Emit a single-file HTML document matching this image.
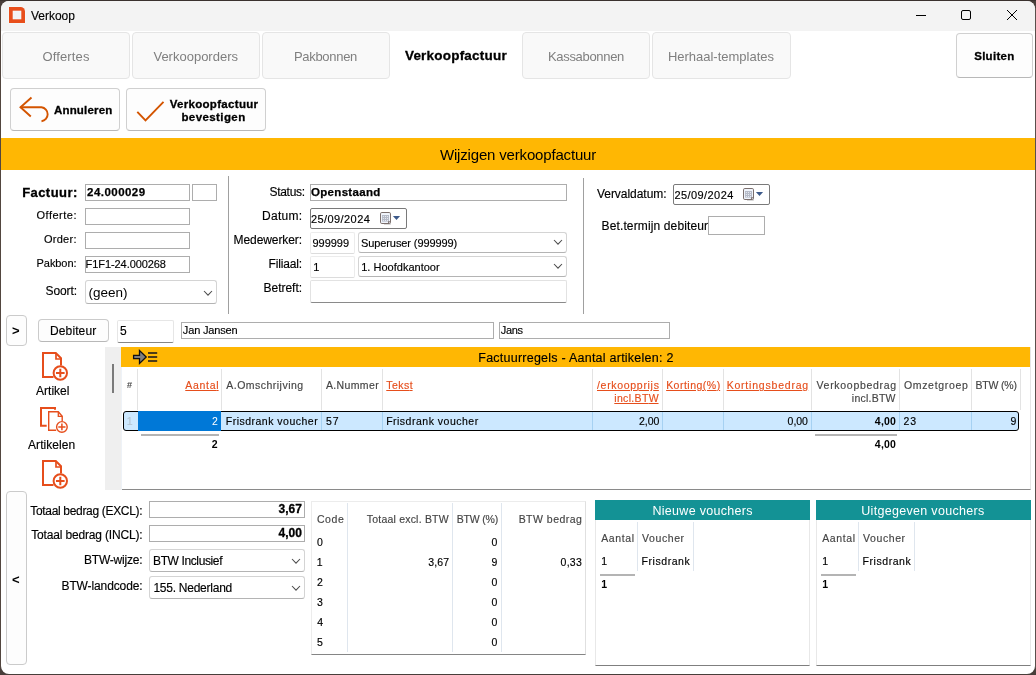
<!DOCTYPE html>
<html><head><meta charset="utf-8"><title>Verkoop</title>
<style>
html,body{margin:0;padding:0}
body{width:1036px;height:675px;background:#483e3a;position:relative;overflow:hidden;font-family:"Liberation Sans",sans-serif;}
div,span,svg{position:absolute;box-sizing:border-box;}
span{white-space:nowrap;display:block}
</style></head><body>
<div style="left:0;top:0;width:1036px;height:675px;will-change:transform">
<div style="left:1px;top:1px;width:1034px;height:673px;background:#fff;border-radius:8px;overflow:hidden"><div style="left:0;top:0;width:1034px;height:30px;background:#f3f3f3"></div></div>
<div style="left:0px;top:0px;width:1036px;height:1px;background:#3a312e;"></div>
<div style="left:0px;top:8px;width:1px;height:660px;background:#52463f;"></div>
<div style="left:1035px;top:8px;width:1px;height:660px;background:#5a4f4b;"></div>
<svg style="left:8px;top:6px" width="18" height="18" viewBox="-1 -1 18 18"><path d="M0 0H11.500L16 4.500V16H0z" fill="#e84e1b" stroke="#f4fbfb" stroke-width="1" paint-order="stroke"/><path d="M11.500 0A4.500 4.500 0 0 1 16 4.500L16 0z" fill="#f3f3f3"/><path d="M0 0H11.500A4.500 4.500 0 0 1 16 4.500V16H0z" fill="#e84e1b"/><rect x="4" y="4" width="8" height="8" fill="#f3f3f3" stroke="#f4fbfb" stroke-width="0.600"/></svg>
<span style="top:10px;font-size:12px;line-height:1;color:#000;-webkit-text-stroke:0.15px #000;left:30.95px;">Verkoop</span>
<svg style="left:910px;top:5px" width="120" height="22" viewBox="0 0 120 22" fill="none" stroke="#000" stroke-width="1"><path d="M6 10.5H16"/><rect x="51.500" y="5.500" width="9" height="9" rx="1.500"/><path d="M97 5L107 15M107 5L97 15"/></svg>
<div style="left:2px;top:32px;width:128px;height:47px;background:#f9f9f9;border:1px solid #e5e5e5;border-radius:4px;"></div>
<div style="left:132px;top:32px;width:128px;height:47px;background:#f9f9f9;border:1px solid #e5e5e5;border-radius:4px;"></div>
<div style="left:262px;top:32px;width:128px;height:47px;background:#f9f9f9;border:1px solid #e5e5e5;border-radius:4px;"></div>
<div style="left:522px;top:32px;width:128px;height:47px;background:#f9f9f9;border:1px solid #e5e5e5;border-radius:4px;"></div>
<div style="left:652px;top:32px;width:139px;height:47px;background:#f9f9f9;border:1px solid #e5e5e5;border-radius:4px;"></div>
<span style="top:50px;font-size:13px;line-height:1;color:#7f7f7f;letter-spacing:0.154px;left:42.39px;">Offertes</span>
<span style="top:50px;font-size:13px;line-height:1;color:#7f7f7f;left:153.45px;">Verkooporders</span>
<span style="top:50px;font-size:13px;line-height:1;color:#7f7f7f;letter-spacing:-0.298px;left:293.93px;">Pakbonnen</span>
<span style="top:49px;font-size:13.5px;line-height:1;color:#000;font-weight:bold;-webkit-text-stroke:0.3px #000;letter-spacing:0.211px;left:404.92px;">Verkoopfactuur</span>
<span style="top:50px;font-size:13px;line-height:1;color:#7f7f7f;letter-spacing:-0.311px;left:547.93px;">Kassabonnen</span>
<span style="top:50px;font-size:13px;line-height:1;color:#7f7f7f;letter-spacing:-0.011px;left:667.93px;">Herhaal-templates</span>
<div style="left:956px;top:33px;width:77px;height:45px;background:#fdfdfd;border:1px solid #d0d0d0;border-bottom-color:#b8b8b8;border-radius:4px;"></div>
<span style="top:51px;font-size:11.5px;line-height:1;color:#000;font-weight:bold;-webkit-text-stroke:0.3px #000;letter-spacing:0.283px;left:974.18px;">Sluiten</span>
<div style="left:10px;top:88px;width:110px;height:43px;background:#fdfdfd;border:1px solid #d0d0d0;border-bottom-color:#b8b8b8;border-radius:4px;"></div>
<div style="left:126px;top:88px;width:140px;height:43px;background:#fdfdfd;border:1px solid #d0d0d0;border-bottom-color:#b8b8b8;border-radius:4px;"></div>
<svg style="left:18px;top:95px" width="34" height="30" viewBox="18 95 34 30" fill="none" stroke="#d35400" stroke-width="1.9" stroke-linecap="butt"><path d="M31.5 97.500L20.500 107.300L30.800 116.500"/><path d="M20.500 107.300H41.500A7 7 0 0 1 41.500 121.200"/></svg>
<span style="top:105px;font-size:11.5px;line-height:1;color:#000;font-weight:bold;-webkit-text-stroke:0.3px #000;letter-spacing:0.203px;left:53.92px;">Annuleren</span>
<svg style="left:134px;top:98px" width="34" height="26" viewBox="134 98 34 26" fill="none" stroke="#d35400" stroke-width="1.9"><path d="M137.300 111.800L145.500 120.300L163.500 101.800"/></svg>
<span style="top:99px;font-size:11.5px;line-height:1;color:#000;font-weight:bold;-webkit-text-stroke:0.3px #000;letter-spacing:0.314px;left:169.63px;">Verkoopfactuur</span>
<span style="top:112px;font-size:11.5px;line-height:1;color:#000;font-weight:bold;-webkit-text-stroke:0.3px #000;letter-spacing:0.409px;left:181.45px;">bevestigen</span>
<div style="left:1px;top:138px;width:1034px;height:32px;background:#ffb703;"></div>
<span style="top:147px;font-size:15px;line-height:1;color:#000;letter-spacing:-0.171px;left:439.94px;">Wijzigen verkoopfactuur</span>
<span style="top:186px;font-size:13px;line-height:1;color:#000;font-weight:bold;-webkit-text-stroke:0.3px #000;letter-spacing:0.444px;left:22.14px;">Factuur:</span>
<div style="left:85px;top:184px;width:105px;height:17px;background:#fff;border:1px solid #adadad;"></div>
<div style="left:192px;top:184px;width:25px;height:17px;background:#fff;border:1px solid #adadad;"></div>
<span style="top:187px;font-size:11.5px;line-height:1;color:#000;font-weight:bold;-webkit-text-stroke:0.25px #000;letter-spacing:0.456px;left:87.11px;">24.000029</span>
<span style="top:210px;font-size:11px;line-height:1;color:#000;-webkit-text-stroke:0.15px #000;letter-spacing:0.505px;left:36.48px;">Offerte:</span>
<div style="left:85px;top:208px;width:105px;height:17px;background:#fff;border:1px solid #adadad;"></div>
<span style="top:234px;font-size:11px;line-height:1;color:#000;-webkit-text-stroke:0.15px #000;letter-spacing:0.268px;left:43.98px;">Order:</span>
<div style="left:85px;top:232px;width:105px;height:17px;background:#fff;border:1px solid #adadad;"></div>
<span style="top:258px;font-size:11px;line-height:1;color:#000;-webkit-text-stroke:0.15px #000;letter-spacing:-0.077px;left:36.60px;">Pakbon:</span>
<div style="left:85px;top:256px;width:105px;height:17px;background:#fff;border:1px solid #adadad;"></div>
<span style="top:259px;font-size:11px;line-height:1;color:#000;-webkit-text-stroke:0.15px #000;letter-spacing:-0.074px;left:85.60px;">F1F1-24.000268</span>
<span style="top:285px;font-size:12px;line-height:1;color:#000;-webkit-text-stroke:0.15px #000;letter-spacing:-0.077px;left:45.46px;">Soort:</span>
<div style="left:85px;top:280px;width:132px;height:24px;background:#fff;border:1px solid #d4d4d4;border-bottom-color:#b4b4b4;border-radius:3px;"></div>
<span style="top:286px;font-size:13.5px;line-height:1;color:#000;letter-spacing:0.010px;left:88.46px;">(geen)</span>
<svg style="left:202.5px;top:289.5px" width="10" height="6.2" viewBox="-1 -1 10 6.2" fill="none" stroke="#4c4c4c" stroke-width="1.050"><path d="M0 0L4.0 4.2L8 0"/></svg>
<div style="left:228px;top:176px;width:1px;height:138px;background:#a0a0a0;"></div>
<div style="left:583px;top:178px;width:1px;height:136px;background:#a0a0a0;"></div>
<span style="top:186px;font-size:12px;line-height:1;color:#000;-webkit-text-stroke:0.15px #000;letter-spacing:-0.287px;left:269.46px;">Status:</span>
<div style="left:310px;top:184px;width:257px;height:17px;background:#fff;border:1px solid #adadad;"></div>
<span style="top:187px;font-size:11.5px;line-height:1;color:#000;font-weight:bold;-webkit-text-stroke:0.25px #000;letter-spacing:0.308px;left:311.03px;">Openstaand</span>
<span style="top:210px;font-size:12px;line-height:1;color:#000;-webkit-text-stroke:0.15px #000;letter-spacing:0.279px;left:262.02px;">Datum:</span>
<div style="left:310px;top:208px;width:97px;height:21px;background:#fff;border:1px solid #7a7a7a;border-radius:2px;"></div>
<span style="top:214px;font-size:11px;line-height:1;color:#000;-webkit-text-stroke:0.15px #000;letter-spacing:0.424px;left:310.95px;">25/09/2024</span>
<svg style="left:380px;top:212px" width="24" height="14" viewBox="0 0 24 14"><path d="M4 12.500H10.500V5" stroke="#d8d8d8" stroke-width="1" fill="none"/><rect x="0.500" y="0.500" width="10" height="11" rx="1.300" fill="#f0f4fb" stroke="#7b6f6d" stroke-width="1"/><rect x="2" y="3" width="7" height="6.600" fill="#b6bbc8"/><rect x="2.9" y="4.1" width="0.900" height="0.900" fill="#f4f6fa"/><rect x="2.9" y="6.1" width="0.900" height="0.900" fill="#f4f6fa"/><rect x="2.9" y="8.1" width="0.900" height="0.900" fill="#f4f6fa"/><rect x="5.0" y="4.1" width="0.900" height="0.900" fill="#f4f6fa"/><rect x="5.0" y="6.1" width="0.900" height="0.900" fill="#f4f6fa"/><rect x="5.0" y="8.1" width="0.900" height="0.900" fill="#f4f6fa"/><rect x="7.1" y="4.1" width="0.900" height="0.900" fill="#f4f6fa"/><rect x="7.1" y="6.1" width="0.900" height="0.900" fill="#f4f6fa"/><rect x="7.1" y="8.1" width="0.900" height="0.900" fill="#f4f6fa"/><path d="M8 11.500V9.300H10.500z" fill="#7b6f6d"/><path d="M12.900 4H20.100L16.500 8z" fill="#3d5a8a"/></svg>
<span style="top:234px;font-size:12px;line-height:1;color:#000;-webkit-text-stroke:0.15px #000;letter-spacing:-0.078px;left:233.52px;">Medewerker:</span>
<div style="left:310px;top:232px;width:45px;height:22px;background:#fff;border:1px solid #ececec;border-bottom-color:#dcdcdc;border-radius:2px;"></div>
<span style="top:238px;font-size:11px;line-height:1;color:#000;-webkit-text-stroke:0.15px #000;letter-spacing:-0.036px;left:312.49px;">999999</span>
<div style="left:358px;top:232px;width:209px;height:21px;background:#fff;border:1px solid #d4d4d4;border-bottom-color:#b4b4b4;border-radius:3px;"></div>
<span style="top:238px;font-size:11px;line-height:1;color:#000;-webkit-text-stroke:0.15px #000;letter-spacing:-0.098px;left:361.00px;">Superuser (999999)</span>
<svg style="left:553px;top:239.3px" width="10" height="6.2" viewBox="-1 -1 10 6.2" fill="none" stroke="#4c4c4c" stroke-width="1.050"><path d="M0 0L4.0 4.2L8 0"/></svg>
<span style="top:258px;font-size:12px;line-height:1;color:#000;-webkit-text-stroke:0.15px #000;letter-spacing:-0.157px;left:268.52px;">Filiaal:</span>
<div style="left:310px;top:256px;width:45px;height:22px;background:#fff;border:1px solid #ececec;border-bottom-color:#dcdcdc;border-radius:2px;"></div>
<span style="top:262px;font-size:11px;line-height:1;color:#000;-webkit-text-stroke:0.15px #000;left:313.16px;">1</span>
<div style="left:358px;top:256px;width:209px;height:21px;background:#fff;border:1px solid #d4d4d4;border-bottom-color:#b4b4b4;border-radius:3px;"></div>
<span style="top:262px;font-size:11px;line-height:1;color:#000;-webkit-text-stroke:0.15px #000;letter-spacing:0.017px;left:361.16px;">1. Hoofdkantoor</span>
<svg style="left:553px;top:263.3px" width="10" height="6.2" viewBox="-1 -1 10 6.2" fill="none" stroke="#4c4c4c" stroke-width="1.050"><path d="M0 0L4.0 4.2L8 0"/></svg>
<span style="top:282px;font-size:12px;line-height:1;color:#000;-webkit-text-stroke:0.15px #000;letter-spacing:-0.016px;left:263.52px;">Betreft:</span>
<div style="left:310px;top:280px;width:257px;height:23px;background:#fff;border:1px solid #e2e2e2;border-bottom-color:#8a8a8a;border-radius:2px;"></div>
<span style="top:188px;font-size:12px;line-height:1;color:#000;-webkit-text-stroke:0.15px #000;letter-spacing:-0.036px;left:596.95px;">Vervaldatum:</span>
<div style="left:673px;top:184px;width:97px;height:21px;background:#fff;border:1px solid #7a7a7a;border-radius:2px;"></div>
<span style="top:190px;font-size:11px;line-height:1;color:#000;-webkit-text-stroke:0.15px #000;letter-spacing:0.424px;left:674.45px;">25/09/2024</span>
<svg style="left:743px;top:188px" width="24" height="14" viewBox="0 0 24 14"><path d="M4 12.500H10.500V5" stroke="#d8d8d8" stroke-width="1" fill="none"/><rect x="0.500" y="0.500" width="10" height="11" rx="1.300" fill="#f0f4fb" stroke="#7b6f6d" stroke-width="1"/><rect x="2" y="3" width="7" height="6.600" fill="#b6bbc8"/><rect x="2.9" y="4.1" width="0.900" height="0.900" fill="#f4f6fa"/><rect x="2.9" y="6.1" width="0.900" height="0.900" fill="#f4f6fa"/><rect x="2.9" y="8.1" width="0.900" height="0.900" fill="#f4f6fa"/><rect x="5.0" y="4.1" width="0.900" height="0.900" fill="#f4f6fa"/><rect x="5.0" y="6.1" width="0.900" height="0.900" fill="#f4f6fa"/><rect x="5.0" y="8.1" width="0.900" height="0.900" fill="#f4f6fa"/><rect x="7.1" y="4.1" width="0.900" height="0.900" fill="#f4f6fa"/><rect x="7.1" y="6.1" width="0.900" height="0.900" fill="#f4f6fa"/><rect x="7.1" y="8.1" width="0.900" height="0.900" fill="#f4f6fa"/><path d="M8 11.500V9.300H10.500z" fill="#7b6f6d"/><path d="M12.900 4H20.100L16.500 8z" fill="#3d5a8a"/></svg>
<span style="top:220px;font-size:12px;line-height:1;color:#000;-webkit-text-stroke:0.15px #000;letter-spacing:0.134px;left:601.52px;">Bet.termijn debiteur:</span>
<div style="left:708px;top:216px;width:57px;height:19px;background:#fff;border:1px solid #adadad;"></div>
<div style="left:6px;top:315px;width:21px;height:31px;background:#fdfdfd;border:1px solid #cbcbcb;border-radius:4px;"></div>
<span style="top:324px;font-size:13px;line-height:1;color:#000;font-weight:bold;left:11.95px;">&gt;</span>
<div style="left:38px;top:319px;width:71px;height:23px;background:#fdfdfd;border:1px solid #cbcbcb;border-radius:4px;border-bottom-color:#b8b8b8;"></div>
<span style="top:325px;font-size:12px;line-height:1;color:#000;-webkit-text-stroke:0.15px #000;letter-spacing:0.117px;left:50.02px;">Debiteur</span>
<div style="left:117px;top:320px;width:57px;height:23px;background:#fff;border:1px solid #e6e6e6;border-bottom-color:#868686;border-radius:2px;"></div>
<span style="top:325px;font-size:12px;line-height:1;color:#000;-webkit-text-stroke:0.15px #000;left:120.02px;">5</span>
<div style="left:181px;top:322px;width:313px;height:17px;background:#fff;border:1px solid #adadad;"></div>
<span style="top:325px;font-size:11px;line-height:1;color:#000;-webkit-text-stroke:0.15px #000;letter-spacing:-0.155px;left:182.84px;">Jan Jansen</span>
<div style="left:499px;top:322px;width:171px;height:17px;background:#fff;border:1px solid #adadad;"></div>
<span style="top:325px;font-size:11px;line-height:1;color:#000;-webkit-text-stroke:0.15px #000;letter-spacing:-0.391px;left:500.83px;">Jans</span>
<svg style="left:42px;top:352px" width="28" height="31" viewBox="0 0 28 31" fill="none" stroke="#e64e1c" stroke-width="2"><path d="M11.500 25H1V1H13.800L19 6.200V13.500"/><path d="M14 1V7H19" stroke-width="1.700"/><circle cx="18.300" cy="21" r="6.700"/><path d="M14 21H22.600M18.300 16.700V25.300"/></svg>
<span style="top:385px;font-size:12px;line-height:1;color:#000;-webkit-text-stroke:0.15px #000;letter-spacing:0.030px;left:35.98px;">Artikel</span>
<svg style="left:40px;top:407px" width="30" height="28" viewBox="0 0 30 28" fill="none" stroke="#e64e1c"><path d="M6.700 18.800H1V1H15V2.700" stroke-width="2"/><path d="M16.200 23.200H8.700V4.800H18.300L22.200 9.300V14" stroke-width="1.400"/><path d="M18.300 4.800V9.300H22.200" stroke-width="1.300"/><circle cx="21.900" cy="19.900" r="5.300" stroke-width="1.400"/><path d="M18.300 19.900H25.500M21.900 16.500V23.300" stroke-width="1.500"/></svg>
<span style="top:439px;font-size:12px;line-height:1;color:#000;-webkit-text-stroke:0.15px #000;letter-spacing:0.038px;left:28.08px;">Artikelen</span>
<div style="left:30px;top:455px;width:60px;height:35px;overflow:hidden">
<svg style="left:12px;top:5px" width="28" height="31" viewBox="0 0 28 31" fill="none" stroke="#e64e1c" stroke-width="2"><path d="M11.500 25H1V1H13.800L19 6.200V13.500"/><path d="M14 1V7H19" stroke-width="1.700"/><circle cx="18.300" cy="21" r="6.700"/><path d="M14 21H22.600M18.300 16.700V25.300"/></svg>
</div>
<div style="left:105px;top:347px;width:16px;height:143px;background:#efefef;"></div>
<div style="left:112px;top:364px;width:2px;height:29px;background:#7a7a7a;"></div>
<div style="left:121px;top:347px;width:910px;height:143px;background:#fff;border-bottom:1px solid #8a8a8a;border-right:1px solid #e6e6e6;"></div>
<div style="left:121px;top:347px;width:909px;height:20px;background:#ffb703;"></div>
<svg style="left:132px;top:348px" width="27" height="18" viewBox="0 0 27 18"><path d="M1.600 7.400H7.500V2.500L14.200 9L7.500 15.500V10.600H1.600z" fill="#808080" stroke="#101014" stroke-width="1.300"/><path d="M16 5H25.200M16 8.900H25.200M16 12.900H25.200" stroke="#15151f" stroke-width="1.500"/></svg>
<span style="top:352px;font-size:12.5px;line-height:1;color:#000;-webkit-text-stroke:0.15px #000;letter-spacing:0.240px;left:478.28px;">Factuurregels - Aantal artikelen: 2</span>
<div style="left:137px;top:369px;width:1px;height:41px;background:#e3e3e3;"></div>
<div style="left:221px;top:369px;width:1px;height:41px;background:#e3e3e3;"></div>
<div style="left:321px;top:369px;width:1px;height:41px;background:#e3e3e3;"></div>
<div style="left:382px;top:369px;width:1px;height:41px;background:#e3e3e3;"></div>
<div style="left:592px;top:369px;width:1px;height:41px;background:#e3e3e3;"></div>
<div style="left:662px;top:369px;width:1px;height:41px;background:#e3e3e3;"></div>
<div style="left:723px;top:369px;width:1px;height:41px;background:#e3e3e3;"></div>
<div style="left:811px;top:369px;width:1px;height:41px;background:#e3e3e3;"></div>
<div style="left:899px;top:369px;width:1px;height:41px;background:#e3e3e3;"></div>
<div style="left:971px;top:369px;width:1px;height:41px;background:#e3e3e3;"></div>
<div style="left:1020px;top:369px;width:1px;height:41px;background:#e3e3e3;"></div>
<div style="left:121px;top:367px;width:1px;height:123px;background:#eef2f7;"></div>
<span style="top:381px;font-size:9px;line-height:1;color:#444;-webkit-text-stroke:0.15px #444;left:126.96px;">#</span>
<span style="top:380px;font-size:10.5px;line-height:1;color:#e64e1c;-webkit-text-stroke:0.15px #e64e1c;letter-spacing:0.709px;left:185.28px;text-decoration:underline;text-underline-offset:1px;text-decoration-thickness:1px;">Aanta<i style="font-style:normal;letter-spacing:0">l</i></span>
<span style="top:380px;font-size:10.5px;line-height:1;color:#444;-webkit-text-stroke:0.15px #444;letter-spacing:0.484px;left:226.28px;">A.Omschrijving</span>
<span style="top:380px;font-size:10.5px;line-height:1;color:#444;-webkit-text-stroke:0.15px #444;letter-spacing:0.359px;left:325.98px;">A.Nummer</span>
<span style="top:380px;font-size:10.5px;line-height:1;color:#e64e1c;-webkit-text-stroke:0.15px #e64e1c;letter-spacing:0.449px;left:386.27px;text-decoration:underline;text-underline-offset:1px;text-decoration-thickness:1px;">Teks<i style="font-style:normal;letter-spacing:0">t</i></span>
<span style="top:380px;font-size:10.5px;line-height:1;color:#e64e1c;-webkit-text-stroke:0.15px #e64e1c;letter-spacing:0.691px;left:597.00px;text-decoration:underline;text-underline-offset:1px;text-decoration-thickness:1px;">/erkoopprij<i style="font-style:normal;letter-spacing:0">s</i></span>
<span style="top:393px;font-size:10.5px;line-height:1;color:#e64e1c;-webkit-text-stroke:0.15px #e64e1c;letter-spacing:0.318px;left:614.31px;text-decoration:underline;text-underline-offset:1px;text-decoration-thickness:1px;">incl.BT<i style="font-style:normal;letter-spacing:0">W</i></span>
<span style="top:380px;font-size:10.5px;line-height:1;color:#e64e1c;-webkit-text-stroke:0.15px #e64e1c;letter-spacing:0.490px;left:666.14px;text-decoration:underline;text-underline-offset:1px;text-decoration-thickness:1px;">Korting(%<i style="font-style:normal;letter-spacing:0">)</i></span>
<span style="top:380px;font-size:10.5px;line-height:1;color:#e64e1c;-webkit-text-stroke:0.15px #e64e1c;letter-spacing:0.794px;left:726.64px;text-decoration:underline;text-underline-offset:1px;text-decoration-thickness:1px;">Kortingsbedra<i style="font-style:normal;letter-spacing:0">g</i></span>
<span style="top:380px;font-size:10.5px;line-height:1;color:#444;-webkit-text-stroke:0.15px #444;letter-spacing:0.708px;left:816.46px;">Verkoopbedrag</span>
<span style="top:393px;font-size:10.5px;line-height:1;color:#444;-webkit-text-stroke:0.15px #444;letter-spacing:0.246px;left:851.81px;">incl.BTW</span>
<span style="top:380px;font-size:10.5px;line-height:1;color:#444;-webkit-text-stroke:0.15px #444;letter-spacing:0.683px;left:903.91px;">Omzetgroep</span>
<span style="top:380px;font-size:10.5px;line-height:1;color:#444;-webkit-text-stroke:0.15px #444;letter-spacing:-0.194px;left:975.54px;">BTW (%)</span>
<div style="left:123px;top:411px;width:896px;height:20px;background:#cce8ff;border:1px solid #000;border-radius:3px;"></div>
<div style="left:138px;top:411px;width:83px;height:20px;background:#0078d7;"></div>
<div style="left:321px;top:412px;width:1px;height:18px;background:#a6d1f2;"></div>
<div style="left:382px;top:412px;width:1px;height:18px;background:#a6d1f2;"></div>
<div style="left:592px;top:412px;width:1px;height:18px;background:#a6d1f2;"></div>
<div style="left:662px;top:412px;width:1px;height:18px;background:#a6d1f2;"></div>
<div style="left:723px;top:412px;width:1px;height:18px;background:#a6d1f2;"></div>
<div style="left:811px;top:412px;width:1px;height:18px;background:#a6d1f2;"></div>
<div style="left:899px;top:412px;width:1px;height:18px;background:#a6d1f2;"></div>
<div style="left:971px;top:412px;width:1px;height:18px;background:#a6d1f2;"></div>
<span style="top:416px;font-size:10.5px;line-height:1;color:#b4c4d2;-webkit-text-stroke:0.15px #b4c4d2;left:126.70px;">1</span>
<span style="top:416px;font-size:10.5px;line-height:1;color:#fff;left:211.88px;">2</span>
<span style="top:416px;font-size:10.5px;line-height:1;color:#000;-webkit-text-stroke:0.15px #000;letter-spacing:0.494px;left:225.74px;">Frisdrank voucher</span>
<span style="top:416px;font-size:10.5px;line-height:1;color:#000;-webkit-text-stroke:0.15px #000;letter-spacing:0.967px;left:325.88px;">57</span>
<span style="top:416px;font-size:10.5px;line-height:1;color:#000;-webkit-text-stroke:0.15px #000;letter-spacing:0.500px;left:386.14px;">Frisdrank voucher</span>
<span style="top:416px;font-size:10.5px;line-height:1;color:#000;-webkit-text-stroke:0.15px #000;left:638.98px;">2,00</span>
<span style="top:416px;font-size:10.5px;line-height:1;color:#000;-webkit-text-stroke:0.15px #000;letter-spacing:-0.042px;left:787.59px;">0,00</span>
<span style="top:416px;font-size:10.5px;line-height:1;color:#000;font-weight:bold;letter-spacing:0.214px;left:874.84px;">4,00</span>
<span style="top:416px;font-size:10.5px;line-height:1;color:#000;-webkit-text-stroke:0.15px #000;letter-spacing:0.799px;left:903.58px;">23</span>
<span style="top:416px;font-size:10.5px;line-height:1;color:#000;-webkit-text-stroke:0.15px #000;left:1010.62px;">9</span>
<div style="left:141px;top:434px;width:78px;height:2px;background:#b4b4b4;"></div>
<span style="top:439px;font-size:10.5px;line-height:1;color:#000;font-weight:bold;left:211.74px;">2</span>
<div style="left:815px;top:434px;width:82px;height:2px;background:#b4b4b4;"></div>
<span style="top:439px;font-size:10.5px;line-height:1;color:#000;font-weight:bold;letter-spacing:0.214px;left:874.84px;">4,00</span>
<div style="left:6px;top:491px;width:21px;height:174px;background:#fdfdfd;border:1px solid #cbcbcb;border-radius:4px;"></div>
<span style="top:573px;font-size:13px;line-height:1;color:#000;font-weight:bold;left:11.95px;">&lt;</span>
<span style="top:505px;font-size:12px;line-height:1;color:#000;-webkit-text-stroke:0.15px #000;letter-spacing:-0.319px;left:30.24px;">Totaal bedrag (EXCL):</span>
<div style="left:149px;top:501px;width:156px;height:17px;background:#fff;border:1px solid #adadad;"></div>
<span style="top:503px;font-size:12px;line-height:1;color:#000;font-weight:bold;-webkit-text-stroke:0.3px #000;letter-spacing:0.075px;left:278.44px;">3,67</span>
<span style="top:529px;font-size:12px;line-height:1;color:#000;-webkit-text-stroke:0.15px #000;letter-spacing:-0.168px;left:31.24px;">Totaal bedrag (INCL):</span>
<div style="left:149px;top:525px;width:156px;height:17px;background:#fff;border:1px solid #adadad;"></div>
<span style="top:527px;font-size:12px;line-height:1;color:#000;font-weight:bold;-webkit-text-stroke:0.3px #000;letter-spacing:0.035px;left:278.52px;">4,00</span>
<span style="top:554px;font-size:12px;line-height:1;color:#000;-webkit-text-stroke:0.15px #000;letter-spacing:-0.208px;left:84.02px;">BTW-wijze:</span>
<div style="left:149px;top:549px;width:156px;height:23px;background:#fff;border:1px solid #d4d4d4;border-bottom-color:#b4b4b4;border-radius:3px;"></div>
<span style="top:555px;font-size:12px;line-height:1;color:#000;-webkit-text-stroke:0.15px #000;letter-spacing:-0.380px;left:153.02px;">BTW Inclusief</span>
<svg style="left:291px;top:557.7px" width="10" height="6.2" viewBox="-1 -1 10 6.2" fill="none" stroke="#4c4c4c" stroke-width="1.050"><path d="M0 0L4.0 4.2L8 0"/></svg>
<span style="top:580px;font-size:12px;line-height:1;color:#000;-webkit-text-stroke:0.15px #000;letter-spacing:-0.117px;left:61.52px;">BTW-landcode:</span>
<div style="left:149px;top:576px;width:156px;height:23px;background:#fff;border:1px solid #d4d4d4;border-bottom-color:#b4b4b4;border-radius:3px;"></div>
<span style="top:582px;font-size:12px;line-height:1;color:#000;-webkit-text-stroke:0.15px #000;letter-spacing:-0.245px;left:153.39px;">155. Nederland</span>
<svg style="left:291px;top:584.7px" width="10" height="6.2" viewBox="-1 -1 10 6.2" fill="none" stroke="#4c4c4c" stroke-width="1.050"><path d="M0 0L4.0 4.2L8 0"/></svg>
<div style="left:311px;top:501px;width:275px;height:154px;background:#fff;border:1px solid #ececec;border-bottom-color:#858585;border-right-color:#e0e0e0;"></div>
<div style="left:347px;top:503px;width:1px;height:149px;background:#dfe6ee;"></div>
<div style="left:452px;top:503px;width:1px;height:149px;background:#dfe6ee;"></div>
<div style="left:501px;top:503px;width:1px;height:149px;background:#dfe6ee;"></div>
<span style="top:514px;font-size:10.5px;line-height:1;color:#444;-webkit-text-stroke:0.15px #444;letter-spacing:0.662px;left:316.88px;">Code</span>
<span style="top:514px;font-size:10.5px;line-height:1;color:#444;-webkit-text-stroke:0.15px #444;letter-spacing:0.206px;left:366.77px;">Totaal excl. BTW</span>
<span style="top:514px;font-size:10.5px;line-height:1;color:#444;-webkit-text-stroke:0.15px #444;letter-spacing:-0.160px;left:456.64px;">BTW (%)</span>
<span style="top:514px;font-size:10.5px;line-height:1;color:#444;-webkit-text-stroke:0.15px #444;letter-spacing:0.488px;left:518.64px;">BTW bedrag</span>
<span style="top:537px;font-size:10.5px;line-height:1;color:#000;-webkit-text-stroke:0.15px #000;left:317.09px;">0</span>
<span style="top:537px;font-size:10.5px;line-height:1;color:#000;-webkit-text-stroke:0.15px #000;left:491.59px;">0</span>
<span style="top:557px;font-size:10.5px;line-height:1;color:#000;-webkit-text-stroke:0.15px #000;left:316.70px;">1</span>
<span style="top:557px;font-size:10.5px;line-height:1;color:#000;-webkit-text-stroke:0.15px #000;left:491.52px;">9</span>
<span style="top:577px;font-size:10.5px;line-height:1;color:#000;-webkit-text-stroke:0.15px #000;left:316.98px;">2</span>
<span style="top:577px;font-size:10.5px;line-height:1;color:#000;-webkit-text-stroke:0.15px #000;left:491.59px;">0</span>
<span style="top:597px;font-size:10.5px;line-height:1;color:#000;-webkit-text-stroke:0.15px #000;left:317.10px;">3</span>
<span style="top:597px;font-size:10.5px;line-height:1;color:#000;-webkit-text-stroke:0.15px #000;left:491.59px;">0</span>
<span style="top:617px;font-size:10.5px;line-height:1;color:#000;-webkit-text-stroke:0.15px #000;left:317.27px;">4</span>
<span style="top:617px;font-size:10.5px;line-height:1;color:#000;-webkit-text-stroke:0.15px #000;left:491.59px;">0</span>
<span style="top:637px;font-size:10.5px;line-height:1;color:#000;-webkit-text-stroke:0.15px #000;left:317.08px;">5</span>
<span style="top:637px;font-size:10.5px;line-height:1;color:#000;-webkit-text-stroke:0.15px #000;left:491.59px;">0</span>
<span style="top:557px;font-size:10.5px;line-height:1;color:#000;-webkit-text-stroke:0.15px #000;letter-spacing:0.163px;left:428.20px;">3,67</span>
<span style="top:557px;font-size:10.5px;line-height:1;color:#000;-webkit-text-stroke:0.15px #000;letter-spacing:0.242px;left:560.59px;">0,33</span>
<div style="left:595px;top:500px;width:215px;height:166px;background:#fff;border:1px solid #e8e8e8;border-bottom-color:#7f7f7f;"></div>
<div style="left:595px;top:500px;width:215px;height:20px;background:#139295;"></div>
<span style="top:505px;font-size:12.5px;line-height:1;color:#fff;letter-spacing:0.292px;left:652.48px;">Nieuwe vouchers</span>
<div style="left:637px;top:522px;width:1px;height:49px;background:#dfe6ee;"></div>
<div style="left:693px;top:522px;width:1px;height:49px;background:#dfe6ee;"></div>
<span style="top:533px;font-size:10.5px;line-height:1;color:#444;-webkit-text-stroke:0.15px #444;letter-spacing:0.649px;left:601.18px;">Aantal</span>
<span style="top:533px;font-size:10.5px;line-height:1;color:#444;-webkit-text-stroke:0.15px #444;letter-spacing:0.580px;left:642.06px;">Voucher</span>
<span style="top:556px;font-size:10.5px;line-height:1;color:#000;-webkit-text-stroke:0.15px #000;left:601.30px;">1</span>
<span style="top:556px;font-size:10.5px;line-height:1;color:#000;-webkit-text-stroke:0.15px #000;letter-spacing:0.560px;left:641.54px;">Frisdrank</span>
<div style="left:600px;top:574px;width:35px;height:2px;background:#b4b4b4;"></div>
<span style="top:579px;font-size:10.5px;line-height:1;color:#000;font-weight:bold;left:601.35px;">1</span>
<div style="left:816px;top:500px;width:215px;height:166px;background:#fff;border:1px solid #e8e8e8;border-bottom-color:#7f7f7f;"></div>
<div style="left:816px;top:500px;width:215px;height:20px;background:#139295;"></div>
<span style="top:505px;font-size:12.5px;line-height:1;color:#fff;letter-spacing:0.310px;left:861.24px;">Uitgegeven vouchers</span>
<div style="left:858px;top:522px;width:1px;height:49px;background:#dfe6ee;"></div>
<div style="left:914px;top:522px;width:1px;height:49px;background:#dfe6ee;"></div>
<span style="top:533px;font-size:10.5px;line-height:1;color:#444;-webkit-text-stroke:0.15px #444;letter-spacing:0.649px;left:822.18px;">Aantal</span>
<span style="top:533px;font-size:10.5px;line-height:1;color:#444;-webkit-text-stroke:0.15px #444;letter-spacing:0.580px;left:863.06px;">Voucher</span>
<span style="top:556px;font-size:10.5px;line-height:1;color:#000;-webkit-text-stroke:0.15px #000;left:822.30px;">1</span>
<span style="top:556px;font-size:10.5px;line-height:1;color:#000;-webkit-text-stroke:0.15px #000;letter-spacing:0.560px;left:862.54px;">Frisdrank</span>
<div style="left:821px;top:574px;width:35px;height:2px;background:#b4b4b4;"></div>
<span style="top:579px;font-size:10.5px;line-height:1;color:#000;font-weight:bold;left:822.35px;">1</span>
</div>
</body></html>
